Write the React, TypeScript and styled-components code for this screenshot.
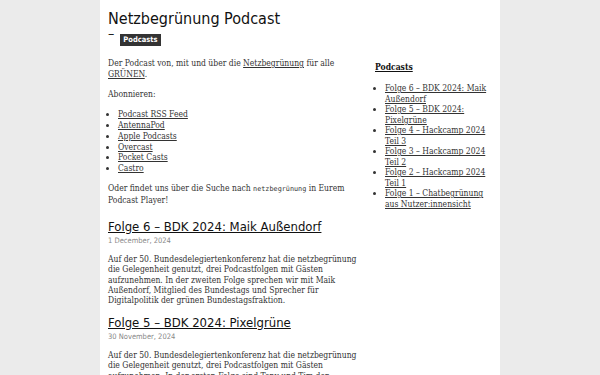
import React from "react";
import styled, { createGlobalStyle } from "styled-components";

const Global = createGlobalStyle`
  html, body { margin: 0; padding: 0; background: #ebebeb; }
  body { font-family: "DejaVu Serif", serif; font-stretch: condensed; color: #333; }
`;

const Page = styled.div`
  width: 384px;
  margin: 0 auto;
  background: #fff;
  padding: 9px 8px 40px;
  min-height: 375px;
`;

const Header = styled.header`
  display: flex;
  flex-direction: column;
`;

const SiteTitle = styled.h1`
  margin: 0;
  font-family: "DejaVu Sans", sans-serif;
  font-stretch: condensed;
  font-weight: normal;
  font-size: 16px;
  line-height: 20px;
  color: #111;
`;

const Tagline = styled.div`
  display: flex;
  align-items: flex-start;
  gap: 6px;
  margin-top: 5.3px;
  font-family: "DejaVu Sans", sans-serif;
  color: #222;
`;

const Dash = styled.span`
  font-size: 14px;
  line-height: 0;
  margin-top: -1.5px;
`;

const Badge = styled.span`
  background: #333;
  color: #fff;
  font-family: "DejaVu Sans", sans-serif;
  font-stretch: condensed;
  font-size: 7.5px;
  font-weight: bold;
  padding: 2px 3px;
  line-height: 8px;
`;

const Columns = styled.div`
  display: grid;
  grid-template-columns: 252px 1fr;
  gap: 15px;
  margin-top: 12px;
`;

const Main = styled.main``;

const Intro = styled.section`
  margin-bottom: 13px;
`;

const P = styled.p`
  margin: 0 0 9.5px;
  font-size: 8.5px;
  line-height: 10.7px;
  &:last-child { margin-bottom: 0; }
`;

const PostBody = styled(P)`
  line-height: 10.3px;
`;

const A = styled.a`
  color: #333;
  text-decoration: underline;
`;

const List = styled.ul<{ $pitch?: number }>`
  margin: 0 0 9.5px;
  padding-left: 10px;
  font-size: 8.5px;
  line-height: ${(p) => p.$pitch ?? 10.7}px;
  list-style: disc;
`;

const Code = styled.code`
  font-family: "DejaVu Sans Mono", monospace;
  font-size: 6.8px;
`;

const Article = styled.article`
  margin-bottom: 9px;
`;

const PostTitle = styled.h2`
  margin: 0;
  font-family: "DejaVu Sans", sans-serif;
  font-stretch: condensed;
  font-weight: normal;
  font-size: 13px;
  line-height: 16px;
  a { color: #111; }
`;

const PostDate = styled.div`
  font-family: "DejaVu Sans", sans-serif;
  font-stretch: condensed;
  font-size: 7.5px;
  line-height: 9px;
  color: #888;
  margin: 1.5px 0 9px;
`;

const Sidebar = styled.aside`
  padding-top: 4px;
`;

const SideTitle = styled.h3`
  margin: 0 0 11px;
  font-size: 8.5px;
  font-weight: bold;
  line-height: 10px;
  text-decoration: underline;
  color: #111;
`;

const posts = [
  "Folge 6 – BDK 2024: Maik Außendorf",
  "Folge 5 – BDK 2024: Pixelgrüne",
  "Folge 4 – Hackcamp 2024 Teil 3",
  "Folge 3 – Hackcamp 2024 Teil 2",
  "Folge 2 – Hackcamp 2024 Teil 1",
  "Folge 1 – Chatbegrünung aus Nutzer:innensicht",
];

export default function App() {
  return (
    <>
      <Global />
      <Page>
        <Header>
          <SiteTitle>Netzbegrünung Podcast</SiteTitle>
          <Tagline>
            <Dash>–</Dash>
            <Badge>Podcasts</Badge>
          </Tagline>
        </Header>
        <Columns>
          <Main>
            <Intro>
              <P>
                Der Podcast von, mit und über die <A href="#">Netzbegrünung</A> für alle{" "}
                <A href="#">GRÜNEN</A>.
              </P>
              <P>Abonnieren:</P>
              <List>
                <li><A href="#">Podcast RSS Feed</A></li>
                <li><A href="#">AntennaPod</A></li>
                <li><A href="#">Apple Podcasts</A></li>
                <li><A href="#">Overcast</A></li>
                <li><A href="#">Pocket Casts</A></li>
                <li><A href="#">Castro</A></li>
              </List>
              <P>
                Oder findet uns über die Suche nach <Code>netzbegrünung</Code> in Eurem Podcast Player!
              </P>
            </Intro>
            <Article>
              <PostTitle><A href="#">Folge 6 – BDK 2024: Maik Außendorf</A></PostTitle>
              <PostDate>1 December, 2024</PostDate>
              <PostBody>
                Auf der 50. Bundesdelegiertenkonferenz hat die netzbegrünung die Gelegenheit genutzt,
                drei Podcastfolgen mit Gästen aufzunehmen. In der zweiten Folge sprechen wir mit Maik
                Außendorf, Mitglied des Bundestags und Sprecher für Digitalpolitik der grünen
                Bundestagsfraktion.
              </PostBody>
            </Article>
            <Article>
              <PostTitle><A href="#">Folge 5 – BDK 2024: Pixelgrüne</A></PostTitle>
              <PostDate>30 November, 2024</PostDate>
              <PostBody>
                Auf der 50. Bundesdelegiertenkonferenz hat die netzbegrünung die Gelegenheit genutzt,
                drei Podcastfolgen mit Gästen aufzunehmen. In der ersten Folge sind Tony und Tim den
                Pixelgrünen zu Gast.
              </PostBody>
            </Article>
          </Main>
          <Sidebar>
            <SideTitle>Podcasts</SideTitle>
            <List $pitch={10.5}>
              {posts.map((p) => (
                <li key={p}><A href="#">{p}</A></li>
              ))}
            </List>
          </Sidebar>
        </Columns>
      </Page>
    </>
  );
}
